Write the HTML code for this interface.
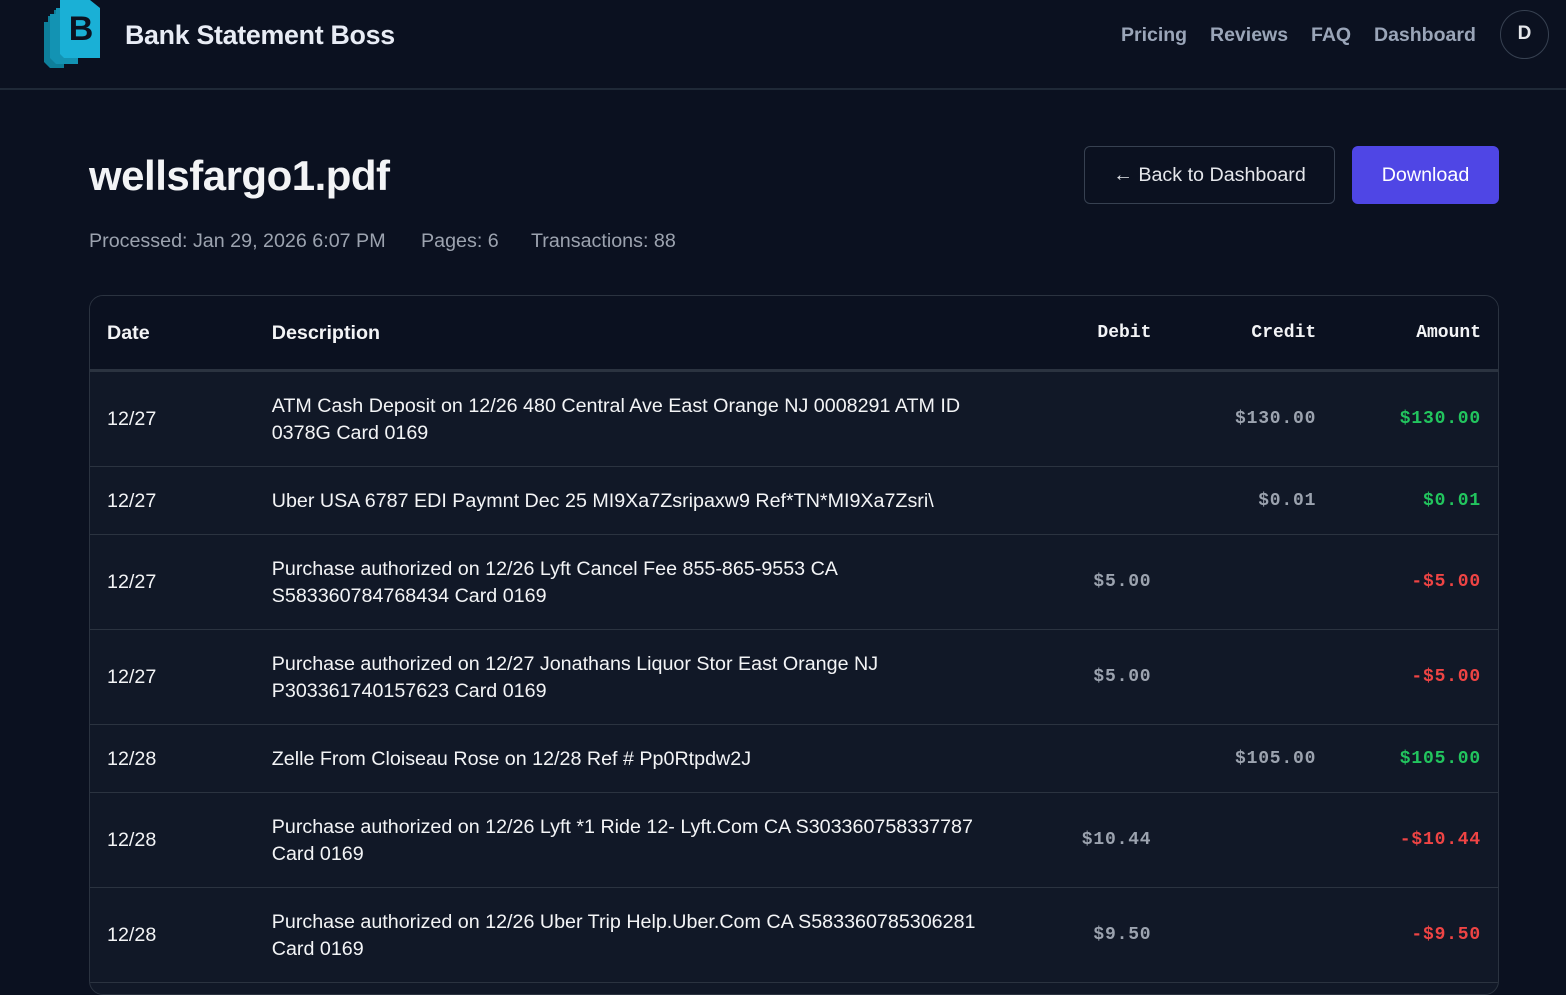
<!DOCTYPE html>
<html><head><style>
*{box-sizing:border-box;margin:0;padding:0}
body{width:1566px;height:978px;overflow:hidden;background:#0b1120;font-family:"Liberation Sans",sans-serif;color:#e5e7eb}
.hdr{height:90px;border-bottom:2px solid #1f2937;position:relative;background:#0b1120}
.brand{position:absolute;left:125px;top:20px;font-size:26.8px;font-weight:bold;color:#e8ecf5;letter-spacing:-0.3px}
.nav{position:absolute;top:24px;font-size:19.5px;font-weight:bold;color:#9aa5b8}
.av{position:absolute;left:1500px;top:10px;width:49px;height:49px;border:1.5px solid #374151;border-radius:50%;color:#e5e7eb;font-weight:bold;font-size:19px;text-align:center;line-height:46px}
h1{position:absolute;left:89px;top:152px;font-size:42px;font-weight:bold;color:#f3f4f6;letter-spacing:-0.5px}
.meta{position:absolute;top:230px;font-size:19.7px;color:#9ca3af}
.btn1{position:absolute;left:1084px;top:146px;width:251px;height:58px;border:1.5px solid #374151;border-radius:6px;color:#e5e7eb;font-size:19.7px;text-align:center;line-height:56px}
.btn2{position:absolute;left:1352px;top:146px;width:147px;height:58px;background:#4f46e5;border-radius:6px;color:#fff;font-size:19.7px;text-align:center;line-height:58px}
.tbl{position:absolute;left:89px;top:295px;width:1410px;height:700px;border:1.5px solid #2b3340;border-radius:14px;overflow:hidden;background:#111827}
table{border-collapse:collapse;width:100%}
th{height:74px;background:#0b1120;border-bottom:3px solid #2b3340;font-size:19.7px;text-align:left;color:#f3f4f6;padding-top:2px}
th.m{font-family:"Liberation Mono",monospace;text-align:right;font-size:18px}
td{border-bottom:1.5px solid #2b3340;padding:21px 0 19px;font-size:19.7px;line-height:27px;color:#f3f4f6;vertical-align:middle}
td.d{padding-right:50px}
td.m{font-family:"Liberation Mono",monospace;text-align:right;font-size:18px;color:#9ca3af;letter-spacing:0.8px;font-weight:bold}
.g{color:#22c55e!important}.r{color:#ef4444!important}
</style></head><body>
<div class="hdr">
<svg style="position:absolute;left:42px;top:0" width="62" height="70" viewBox="0 0 62 70">
<path d="M2 22h4v-6h6v-6h10v58H8l-6-6z" fill="#0e7f9a"/>
<path d="M8 14h6v-6h8v-4h14v60H14l-6-6z" fill="#1393b3"/>
<path d="M18 0h30l10 8v50H22l-4-4z" fill="#1ab0d6"/>
<text x="39" y="40" font-family="Liberation Sans" font-weight="bold" font-size="34" fill="#0b1120" text-anchor="middle">B</text>
</svg>
<div class="brand">Bank Statement Boss</div>
<div class="nav" style="left:1121px">Pricing</div>
<div class="nav" style="left:1210px">Reviews</div>
<div class="nav" style="left:1311px">FAQ</div>
<div class="nav" style="left:1374px">Dashboard</div>
<div class="av">D</div>
</div>
<h1>wellsfargo1.pdf</h1>
<div class="meta" style="left:89px">Processed: Jan 29, 2026 6:07 PM</div>
<div class="meta" style="left:421px">Pages: 6</div>
<div class="meta" style="left:531px">Transactions: 88</div>
<div class="btn1">← Back to Dashboard</div>
<div class="btn2">Download</div>
<div class="tbl"><table>
<colgroup><col style="width:182px"><col style="width:780px"><col style="width:101px"><col style="width:165px"><col style="width:165px"><col style="width:17px"></colgroup>
<tr><th style="padding-left:17px">Date</th><th>Description</th><th class="m">Debit</th><th class="m">Credit</th><th class="m">Amount</th><th></th></tr>
<tr><td style="padding-left:17px">12/27</td><td class="d">ATM Cash Deposit on 12/26 480 Central Ave East Orange NJ 0008291 ATM ID 0378G Card 0169</td><td class="m"></td><td class="m">$130.00</td><td class="m g">$130.00</td><td></td></tr>
<tr><td style="padding-left:17px">12/27</td><td class="d">Uber USA 6787 EDI Paymnt Dec 25 MI9Xa7Zsripaxw9 Ref*TN*MI9Xa7Zsri\</td><td class="m"></td><td class="m">$0.01</td><td class="m g">$0.01</td><td></td></tr>
<tr><td style="padding-left:17px">12/27</td><td class="d">Purchase authorized on 12/26 Lyft Cancel Fee 855-865-9553 CA S583360784768434 Card 0169</td><td class="m">$5.00</td><td class="m"></td><td class="m r">-$5.00</td><td></td></tr>
<tr><td style="padding-left:17px">12/27</td><td class="d">Purchase authorized on 12/27 Jonathans Liquor Stor East Orange NJ P303361740157623 Card 0169</td><td class="m">$5.00</td><td class="m"></td><td class="m r">-$5.00</td><td></td></tr>
<tr><td style="padding-left:17px">12/28</td><td class="d">Zelle From Cloiseau Rose on 12/28 Ref # Pp0Rtpdw2J</td><td class="m"></td><td class="m">$105.00</td><td class="m g">$105.00</td><td></td></tr>
<tr><td style="padding-left:17px">12/28</td><td class="d">Purchase authorized on 12/26 Lyft *1 Ride 12- Lyft.Com CA S303360758337787 Card 0169</td><td class="m">$10.44</td><td class="m"></td><td class="m r">-$10.44</td><td></td></tr>
<tr><td style="padding-left:17px">12/28</td><td class="d">Purchase authorized on 12/26 Uber Trip Help.Uber.Com CA S583360785306281 Card 0169</td><td class="m">$9.50</td><td class="m"></td><td class="m r">-$9.50</td><td></td></tr>
</table></div>
</body></html>
